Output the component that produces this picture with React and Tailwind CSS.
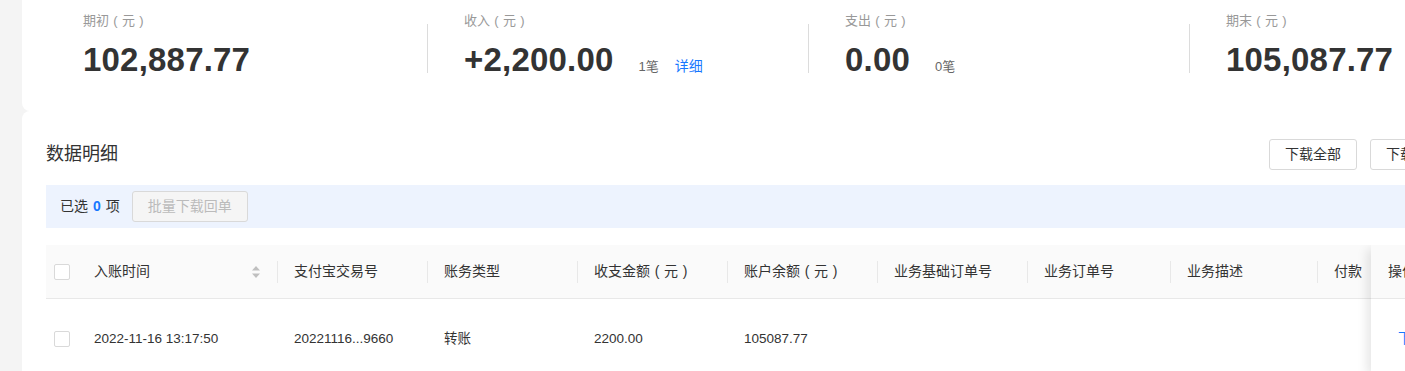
import React from "react";

const FONT = { fontFamily: '"Liberation Sans", "Noto Sans CJK SC", sans-serif' };

function P({ c }) {
  return <span className="inline-block w-[1em] text-center">{c}</span>;
}

function Yuan({ prefix }) {
  return (
    <>
      {prefix}
      <P c="(" />元<P c=")" />
    </>
  );
}

function Checkbox() {
  return <div className="w-4 h-4 border border-[#d9d9d9] rounded-[2px] bg-white shrink-0" />;
}

function SortIcon() {
  return (
    <svg width="10" height="14" viewBox="0 0 10 14" className="shrink-0">
      <path d="M5 1 L9 5.5 H1 Z" fill="#bfbfbf" />
      <path d="M5 13 L9 8.5 H1 Z" fill="#bfbfbf" />
    </svg>
  );
}

function Stat({ label, value, first, extra }) {
  return (
    <div className="flex w-[381px] shrink-0">
      <div className={`w-px h-[49px] mt-[24px] shrink-0 ${first ? "" : "bg-[#dcdcdc]"}`} />
      <div className="pl-[36px] pt-[11px]">
        <div className="text-[13px] leading-[20px] text-[#999]">{label}</div>
        <div className="flex items-baseline mt-[9px]">
          <span className="text-[33px] leading-[40px] font-bold text-[#333] tracking-[0.2px]">{value}</span>
          {extra}
        </div>
      </div>
    </div>
  );
}

const cols = [
  { key: "bill", title: "支付宝交易号", w: "w-[150px]" },
  { key: "type", title: "账务类型", w: "w-[150px]" },
  { key: "amt", title: <Yuan prefix="收支金额" />, w: "w-[150px]" },
  { key: "bal", title: <Yuan prefix="账户余额" />, w: "w-[150px]" },
  { key: "base", title: "业务基础订单号", w: "w-[150px]" },
  { key: "order", title: "业务订单号", w: "w-[143px]" },
  { key: "desc", title: "业务描述", w: "w-[147px]" },
  { key: "payer", title: "付款", w: "w-[160px]" },
];

const row = {
  bill: "20221116...9660",
  type: "转账",
  amt: "2200.00",
  bal: "105087.77",
  base: "",
  order: "",
  desc: "",
  payer: "",
};

export default function App() {
  return (
    <div className="w-[1405px] h-[371px] overflow-hidden bg-[#f4f4f4] pl-[22px]" style={FONT}>
      <div className="w-[1497px]">
        {/* Summary card */}
        <div className="bg-white rounded-b-lg h-[111px] pl-[24px] flex">
          <Stat label={<Yuan prefix="期初" />} value="102,887.77" first />
          <Stat
            label={<Yuan prefix="收入" />}
            value="+2,200.00"
            extra={
              <>
                <span className="ml-[25px] text-[13px] text-[#666]">1笔</span>
                <span className="ml-[16px] text-[14px] text-[#1677ff]">详细</span>
              </>
            }
          />
          <Stat
            label={<Yuan prefix="支出" />}
            value="0.00"
            extra={<span className="ml-[25px] text-[13px] text-[#666]">0笔</span>}
          />
          <Stat label={<Yuan prefix="期末" />} value="105,087.77" />
        </div>

        {/* Detail card */}
        <div className="bg-white rounded-t-lg h-[300px] pl-[24px] pt-[27px]">
          <div className="w-[1425px]">
            <div className="flex items-center justify-between pr-[13px]">
              <div className="text-[18px] leading-[32px] text-[#333]">数据明细</div>
              <div className="flex gap-[13px]">
                <button className="h-[31px] w-[88px] border border-[#d9d9d9] rounded-[3px] bg-white text-[14px] text-[#333]">下载全部</button>
                <button className="h-[31px] w-[88px] border border-[#d9d9d9] rounded-[3px] bg-white text-[14px] text-[#333]">下载明细</button>
              </div>
            </div>

            <div className="mt-[15px] h-[43px] bg-[#edf3fe] flex items-center pl-[14px] text-[14px] text-[#333]">
              <span>已选</span>
              <span className="mx-[5px] font-bold text-[#1677ff]">0</span>
              <span>项</span>
              <button className="ml-[12px] h-[31px] w-[116px] border border-[#d9d9d9] rounded-[3px] bg-[#f5f5f5] text-[14px] text-[#bbb]">批量下载回单</button>
            </div>

            <div className="relative mt-[17px] overflow-hidden text-[#333]">
              {/* Header */}
              <div className="flex h-[54px] bg-[#fafafa] border-b border-[#e8e8e8] items-center text-[14px] whitespace-nowrap">
                <div className="w-[32px] pl-[8px] shrink-0"><Checkbox /></div>
                <div className="w-[199px] shrink-0 flex items-center pl-[16px] pr-[16px] justify-between">
                  <span>入账时间</span>
                  <SortIcon />
                </div>
                {cols.map((c) => (
                  <div key={c.key} className={`${c.w} shrink-0 flex items-center`}>
                    <div className="w-px h-[22px] bg-[#e8e8e8] shrink-0" />
                    <span className="pl-[16px]">{c.title}</span>
                  </div>
                ))}
              </div>
              {/* Body row */}
              <div className="flex h-[80px] items-center text-[13.5px] whitespace-nowrap">
                <div className="w-[32px] pl-[8px] shrink-0"><Checkbox /></div>
                <div className="w-[199px] shrink-0 pl-[16px]">2022-11-16 13:17:50</div>
                {cols.map((c) => (
                  <div key={c.key} className={`${c.w} shrink-0 pl-[17px]`}>{row[c.key]}</div>
                ))}
              </div>

              {/* Fixed action column */}
              <div className="absolute right-0 top-0 bottom-0 w-[100px] bg-white shadow-[-8px_0_10px_-4px_rgba(0,0,0,0.1)]">
                <div className="h-[54px] bg-[#fafafa] border-b border-[#e8e8e8] flex items-center pl-[17px] text-[14px]">操作</div>
                <div className="h-[80px] flex items-center pl-[27px] text-[13.5px] text-[#1677ff]">下载</div>
              </div>
            </div>
          </div>
        </div>
      </div>
    </div>
  );
}
